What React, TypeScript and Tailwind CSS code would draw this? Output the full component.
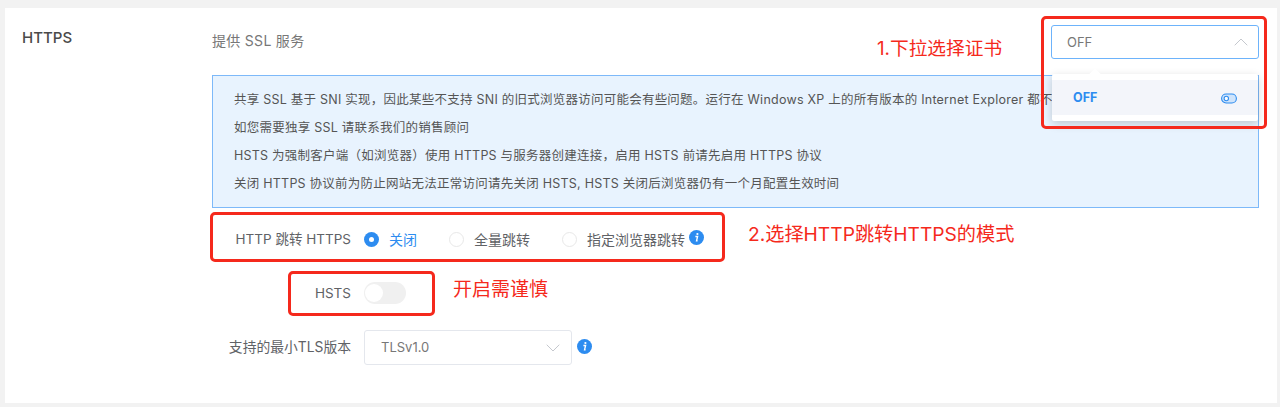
import { ChevronDown, ChevronUp } from "lucide-react";

const FONT = "font-['Inter','Noto_Sans_CJK_SC',sans-serif]";

const NOTES = [
  "共享 SSL 基于 SNI 实现，因此某些不支持 SNI 的旧式浏览器访问可能会有些问题。运行在 Windows XP 上的所有版本的 Internet Explorer 都不",
  "如您需要独享 SSL 请联系我们的销售顾问",
  "HSTS 为强制客户端（如浏览器）使用 HTTPS 与服务器创建连接，启用 HSTS 前请先启用 HTTPS 协议",
  "关闭 HTTPS 协议前为防止网站无法正常访问请先关闭 HSTS, HSTS 关闭后浏览器仍有一个月配置生效时间",
];

function InfoIcon() {
  return (
    <svg width="15" height="15" viewBox="0 0 15 15" className="shrink-0">
      <circle cx="7.5" cy="7.5" r="7.5" fill="#2d8cf0" />
      <circle cx="8.4" cy="4" r="1.1" fill="#fff" />
      <path d="M6.4 6.5h2.2l-1 4.2h1" stroke="#fff" strokeWidth="1.4" fill="none" />
    </svg>
  );
}

function Radio({ label, checked }: { label: string; checked?: boolean }) {
  return (
    <div className="flex items-center">
      {checked ? (
        <span className="flex h-[15px] w-[15px] items-center justify-center rounded-full bg-[#2d8cf0]">
          <span className="h-[5px] w-[5px] rounded-full bg-white" />
        </span>
      ) : (
        <span className="h-[15px] w-[15px] rounded-full border border-[#e8e8e8] bg-white" />
      )}
      <span className={`ml-[10px] text-[14px] ${checked ? "text-[#2d8cf0]" : "text-[#606266]"}`}>{label}</span>
    </div>
  );
}

export default function App() {
  return (
    <div className={`h-[407px] w-[1280px] overflow-hidden bg-[#f2f2f2] pb-[4px] pl-[5px] pr-[3px] pt-[8px] ${FONT}`}>
      <div className="relative flex h-full bg-white pl-[17px]">
        <div className="w-[190px] pt-[20px] text-[15px] font-medium leading-[20px] text-[#4a4a4a]">HTTPS</div>

        <div className="w-[1047px] pt-[17px]">
          <div className="flex h-[34px] items-center justify-between">
            <span className="pb-[4px] text-[14px] tracking-[0.3px] text-[#777]">提供 SSL 服务</span>
            <div className="flex h-[34px] w-[208px] items-center justify-between rounded-[3px] border border-[#6db3fb] pl-[15px] pr-[5px] text-[13px] text-[#777]">
              <span className="pt-[1px]">OFF</span>
              <ChevronUp size={24} strokeWidth={1} className="text-[#c5c8ce]" />
            </div>
          </div>

          <div className="mt-[16px] h-[133px] border border-[#7db9f9] bg-[#e8f3fe] pl-[21px] pt-[10px] text-[12.5px] leading-[28px] tracking-[0.24px] text-[#555]">
            {NOTES.map((line) => (
              <div key={line} className="whitespace-nowrap">{line}</div>
            ))}
          </div>

          <div className="mt-[16px] flex h-[30px] items-center">
            <span className="w-[140px] pr-[1px] text-right text-[13.5px] text-[#606266]">HTTP 跳转 HTTPS</span>
            <div className="ml-[12px] flex items-center gap-[32px]">
              <Radio label="关闭" checked />
              <Radio label="全量跳转" />
              <div className="flex items-center gap-[4px]">
                <Radio label="指定浏览器跳转" />
                <span className="-mt-[3px]"><InfoIcon /></span>
              </div>
            </div>
          </div>

          <div className="mt-[24px] flex h-[30px] items-center">
            <span className="w-[140px] pr-[1px] text-right text-[13.5px] text-[#606266]">HSTS</span>
            <span className="ml-[12px] flex h-[22px] w-[42px] items-center rounded-full bg-[#f0f0f0] pl-[1px]">
              <span className="h-[18px] w-[18px] rounded-full bg-white" />
            </span>
          </div>

          <div className="mt-[22px] flex items-center">
            <span className="w-[140px] pr-[1px] text-right text-[13.8px] text-[#606266]">支持的最小TLS版本</span>
            <div className="ml-[12px] flex h-[35px] w-[208px] items-center justify-between rounded-[3px] border border-[#e4e7ed] pl-[16px] pr-[6px] text-[13px] text-[#777]">
              TLSv1.0
              <ChevronDown size={24} strokeWidth={1} className="text-[#c5c8ce]" />
            </div>
            <span className="ml-[5px] -mt-[3px]"><InfoIcon /></span>
          </div>
        </div>

        {/* dropdown panel */}
        <div className="absolute left-[1047px] top-[66px] h-[47px] w-[206px] rounded-[2px] bg-white py-[6px] shadow-[0_3px_10px_rgba(0,0,0,0.18)]">
          <span className="absolute -top-[4px] left-[39px] h-[8px] w-[8px] rotate-45 bg-white" />
          <div className="relative flex h-[35px] items-center justify-between bg-[#f3f5fa] px-[21px] pt-[1px] text-[12.5px] font-bold text-[#2d8cf0]">
            OFF
            <svg width="16" height="11" viewBox="0 0 16 11" fill="none" stroke="#2d8cf0" strokeWidth="1.1">
              <rect x="0.6" y="1" width="14.8" height="9" rx="4.5" fill="#cfe4fb" />
              <circle cx="5.3" cy="5.5" r="2.2" fill="#fff" />
            </svg>
          </div>
        </div>

        {/* red annotations */}
        <div className="absolute left-[1036px] top-[8px] h-[113px] w-[226px] rounded-[5px] border-[3px] border-[#f5291c]" />
        <div className="absolute left-[205px] top-[204px] h-[50px] w-[515px] rounded-[5px] border-[3px] border-[#f5291c]" />
        <div className="absolute left-[283px] top-[263px] h-[45px] w-[147px] rounded-[5px] border-[3px] border-[#f5291c]" />
        <span className="absolute left-[872px] top-[29px] text-[18.7px] leading-[24px] text-[#f5291c]">1.下拉选择证书</span>
        <span className="absolute left-[743px] top-[214px] text-[19.2px] leading-[24px] text-[#f5291c]">2.选择HTTP跳转HTTPS的模式</span>
        <span className="absolute left-[448px] top-[270px] text-[19px] leading-[24px] text-[#f5291c]">开启需谨慎</span>
      </div>
    </div>
  );
}
